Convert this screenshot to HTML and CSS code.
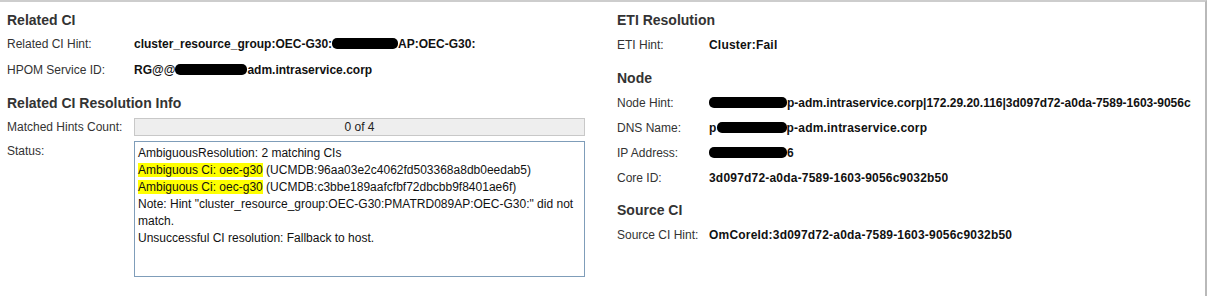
FILE: index.html
```html
<!DOCTYPE html>
<html lang="en">
  <head>
    <meta charset="UTF-8" />
    <title>Event Details - Resolution</title>
    <link rel="stylesheet" href="styles.css">
  </head>
  <body>
    <div class="panel">
      <!-- Left column -->
      <div class="column left">
        <div class="section">
          <h2>Related CI</h2>
          <div class="field tall">
            <span class="label">Related CI Hint:</span>
            <span class="value">cluster_resource_group:OEC-G30:<span class="redact r-hint"></span>AP:OEC-G30:</span>
          </div>
          <div class="field tall">
            <span class="label">HPOM Service ID:</span>
            <span class="value">RG@@<span class="redact r-hpom"></span>adm.intraservice.corp</span>
          </div>
        </div>

        <div class="section">
          <h2>Related CI Resolution Info</h2>
          <div class="field">
            <span class="label">Matched Hints Count:</span>
            <div class="progress">0 of 4</div>
          </div>
          <div class="field status-row">
            <span class="label">Status:</span>
            <div class="status-box">
              <div>AmbiguousResolution: 2 matching CIs</div>
              <div><span class="mark">Ambiguous Ci: oec-g30</span> (UCMDB:96aa03e2c4062fd503368a8db0eedab5)</div>
              <div><span class="mark">Ambiguous Ci: oec-g30</span> (UCMDB:c3bbe189aafcfbf72dbcbb9f8401ae6f)</div>
              <div>Note: Hint "cluster_resource_group:OEC-G30:PMATRD089AP:OEC-G30:" did not match.</div>
              <div>Unsuccessful CI resolution: Fallback to host.</div>
            </div>
          </div>
        </div>
      </div>

      <!-- Right column -->
      <div class="column right">
        <div class="section">
          <h2>ETI Resolution</h2>
          <div class="field">
            <span class="label">ETI Hint:</span>
            <span class="value">Cluster:Fail</span>
          </div>
        </div>

        <div class="section node">
          <h2>Node</h2>
          <div class="field clipped">
            <span class="label">Node Hint:</span>
            <span class="value node-hint"><span class="redact r-node"></span>p-adm.intraservice.corp|172.29.20.116|3d097d72-a0da-7589-1603-9056c9032b50</span>
          </div>
          <div class="field">
            <span class="label">DNS Name:</span>
            <span class="value">p<span class="redact r-dns"></span>p-adm.intraservice.corp</span>
          </div>
          <div class="field">
            <span class="label">IP Address:</span>
            <span class="value"><span class="redact r-ip"></span>6</span>
          </div>
          <div class="field">
            <span class="label">Core ID:</span>
            <span class="value">3d097d72-a0da-7589-1603-9056c9032b50</span>
          </div>
        </div>

        <div class="section">
          <h2>Source CI</h2>
          <div class="field">
            <span class="label">Source CI Hint:</span>
            <span class="value">OmCoreId:3d097d72-a0da-7589-1603-9056c9032b50</span>
          </div>
        </div>
      </div>
    </div>
  </body>
</html>
```

FILE: styles.css
```css
body {
  margin: 0;
  background: #fff;
  font-family: "Liberation Sans", Arial, sans-serif;
  font-size: 12px;
  color: #222;
}

.panel {
  display: flex;
  width: 1205px;
  height: 294px;
  border-top: 2px solid #cdcdcd;
  border-right: 2px solid #b9b9b9;
  overflow: hidden;
}

.column {
  padding-top: 6px;
}

.left {
  width: 617px;
  padding-left: 7px;
  box-sizing: border-box;
  flex-shrink: 0;
}

.right {
  flex: 1;
  min-width: 0;
}

.section {
  margin-bottom: 8px;
}

h2 {
  margin: 0;
  height: 24px;
  line-height: 24px;
  font-size: 14px;
  font-weight: bold;
  color: #333;
}

.left h2 {
  height: 23px;
  line-height: 24px;
}

.right .node {
  padding-top: 1px;
}

.field {
  display: flex;
  align-items: center;
  height: 25px;
  white-space: nowrap;
}

.field.tall {
  height: 26px;
}

.label {
  width: 127px;
  flex-shrink: 0;
  color: #333;
}

.value {
  font-weight: bold;
  color: #111;
}

.right .field {
  margin-right: 7px;
}

.right .field.clipped {
  margin-right: 14px;
}

.right .label {
  width: 92px;
}

.right .value {
  min-width: 0;
  overflow: hidden;
  letter-spacing: 0.2px;
}

.right .node-hint {
  letter-spacing: 0;
}

.redact {
  display: inline-block;
  height: 11px;
  background: #000;
  border-radius: 5px;
  vertical-align: -1px;
}

.r-hint { width: 66px; }
.r-hpom { width: 72px; }
.r-node { width: 78px; }
.r-dns { width: 70px; }
.r-ip { width: 78px; }

.progress {
  width: 449px;
  height: 16px;
  line-height: 16px;
  background: #eeeeee;
  border: 1px solid #c8c8c8;
  text-align: center;
  color: #222;
}

.status-row {
  align-items: flex-start;
  height: auto;
  margin-top: 2px;
}

.status-row .label {
  padding-top: 3px;
}

.status-box {
  width: 443px;
  height: 129px;
  border: 1px solid #7f9db9;
  padding: 3px 3px 2px;
  line-height: 17px;
  white-space: normal;
  color: #111;
}

.mark {
  background: #ffff00;
}
```
